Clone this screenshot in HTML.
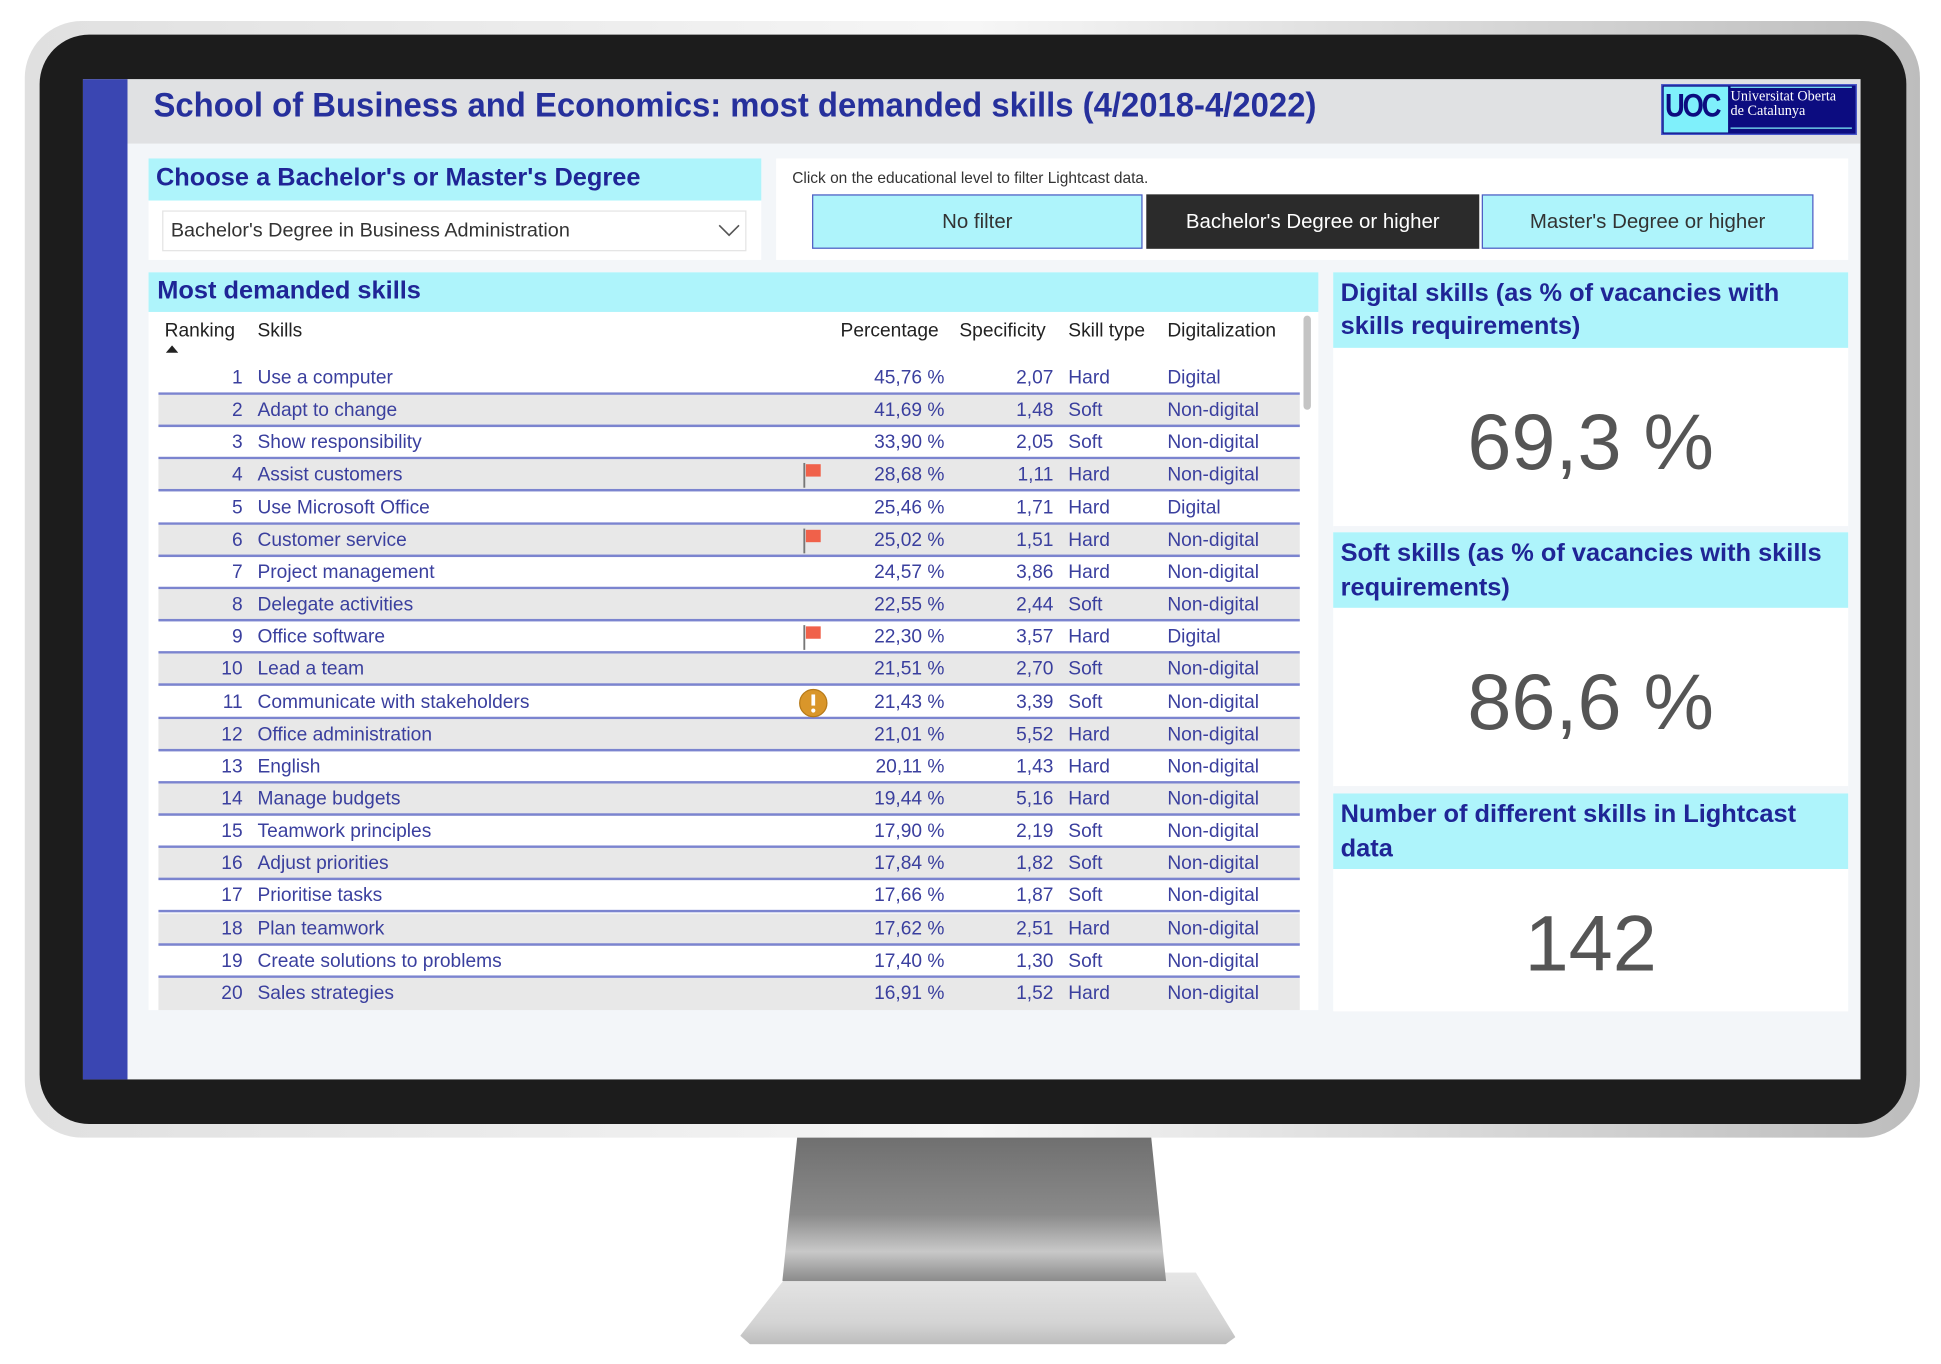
<!DOCTYPE html>
<html><head><meta charset="utf-8"><style>
*{margin:0;padding:0;box-sizing:border-box}
html,body{width:1941px;height:1364px;overflow:hidden;background:#fff;font-family:"Liberation Sans",sans-serif}
#s{position:absolute;left:0;top:0;width:1568px;height:1102px;transform:scale(1.23788);transform-origin:0 0}
.a{position:absolute}
.hd{background:#aef4fb;color:#1f2596;font-weight:bold}
.r{position:absolute;left:128px;width:922px;height:26px;border-bottom:2px solid #7b84cf;color:#3a3f9e;font-size:15.5px}
.r span{position:absolute;top:4px;white-space:nowrap}
.g{background:#e8e8e8}
.big{position:absolute;left:1077px;width:416px;text-align:center;font-size:64px;color:#555}
</style></head><body><div id="s">
<div class="a" style="left:598px;top:1028px;width:400px;height:58px;background:linear-gradient(180deg,#e6e6e6,#d4d4d4 70%,#bdbdbd);clip-path:polygon(10% 0,92% 0,100% 90%,98% 100%,2% 100%,0 88%);"></div>
<div class="a" style="left:632px;top:915px;width:310px;height:120px;background:linear-gradient(180deg,#6e6e6e,#8a8a8a 55%,#c8c8c8 80%,#8a8a8a);clip-path:polygon(4% 0,96% 0,100% 100%,0 100%)"></div>
<div class="a" style="left:20px;top:17px;width:1531px;height:902px;border-radius:46px;background:linear-gradient(90deg,#e0e0e0,#f6f6f6 50%,#bdbdbd)"></div>
<div class="a" style="left:32px;top:28px;width:1508px;height:880px;border-radius:40px;background:#1c1c1c"></div>
<div class="a" style="left:67px;top:64px;width:1436px;height:808px;background:#f3f6f9"></div>
<div class="a" style="left:67px;top:64px;width:36px;height:808px;background:#3a46b2"></div>
<div class="a" style="left:103px;top:64px;width:1400px;height:52px;background:#e0e1e3"></div>
<div class="a" style="left:124px;top:67px;font-size:27.5px;font-weight:bold;color:#26309c;white-space:nowrap;transform:scaleX(.965);transform-origin:0 0;line-height:36px">School of Business and Economics: most demanded skills (4/2018-4/2022)</div>
<div class="a" style="left:1342px;top:68px;width:158px;height:41px;background:#0c0c80;border:1px solid #4a5ad0"></div>
<div class="a" style="left:1344px;top:70px;width:52px;height:37px;background:#7ff0fb"></div>
<div class="a" style="left:1345px;top:68px;font-size:26px;font-weight:bold;color:#0c0c80;letter-spacing:-2px;line-height:34px;transform:scaleX(.85);transform-origin:0 0">UOC</div>
<div class="a" style="left:1398px;top:72px;font-family:'Liberation Serif',serif;font-size:11.5px;color:#fff;line-height:12px">Universitat Oberta<br>de Catalunya</div>
<div class="a" style="left:1398px;top:70px;width:98px;height:1px;background:#7ff0fb"></div>
<div class="a" style="left:1398px;top:103px;width:98px;height:1px;background:#7ff0fb"></div>
<div class="a" style="left:120px;top:128px;width:495px;height:82px;background:#fff"></div>
<div class="a hd" style="left:120px;top:128px;width:495px;height:34px;font-size:20.5px;padding:4px 0 0 6px">Choose a Bachelor's or Master's Degree</div>
<div class="a" style="left:131px;top:170px;width:472px;height:33px;border:1px solid #e4e4e4;background:#fff;font-size:16px;color:#333;padding:7px 0 0 6px">Bachelor's Degree in Business Administration</div>
<svg class="a" style="left:580px;top:180px" width="18" height="12"><path d="M1 2 L9 10 L17 2" fill="none" stroke="#555" stroke-width="1.3"/></svg>
<div class="a" style="left:627px;top:128px;width:866px;height:82px;background:#fff"></div>
<div class="a" style="left:640px;top:137px;font-size:12.5px;color:#333">Click on the educational level to filter Lightcast data.</div>
<div class="a" style="left:656px;top:157px;width:267px;height:44px;background:#aef4fb;border:1px solid #4f5cc4;font-size:16.5px;color:#333;text-align:center;line-height:42px">No filter</div>
<div class="a" style="left:926px;top:157px;width:269px;height:44px;background:#2b2b2b;font-size:16.5px;color:#fff;text-align:center;line-height:44px">Bachelor's Degree or higher</div>
<div class="a" style="left:1197px;top:157px;width:268px;height:44px;background:#aef4fb;border:1px solid #4f5cc4;font-size:16.5px;color:#333;text-align:center;line-height:42px">Master's Degree or higher</div>
<div class="a" style="left:120px;top:220px;width:945px;height:596px;background:#fff"></div>
<div class="a hd" style="left:120px;top:220px;width:945px;height:32px;font-size:20.5px;padding:3px 0 0 7px">Most demanded skills</div>
<div class="a" style="left:0;top:259px;font-size:15.5px;color:#222;width:1100px;height:20px">
<span class="a" style="left:133px">Ranking</span><span class="a" style="left:208px">Skills</span><span class="a" style="left:679px">Percentage</span><span class="a" style="left:775px">Specificity</span><span class="a" style="left:863px">Skill type</span><span class="a" style="left:943px">Digitalization</span></div>
<svg class="a" style="left:134px;top:279px" width="10" height="7"><path d="M0 6 L5 0 L10 6Z" fill="#222"/></svg>
<div class="a" style="left:1053px;top:255px;width:6px;height:76px;background:#c4c4c4;border-radius:3px"></div>
<div id="rows"></div>
<div class="a" style="left:1077px;top:220px;width:416px;height:597px;background:#fff"></div>
<div class="a hd" style="left:1077px;top:220px;width:416px;height:61px;font-size:20.5px;padding:3px 6px;line-height:27px">Digital skills (as % of vacancies with skills requirements)</div>
<div class="a" style="left:1077px;top:425px;width:416px;height:5px;background:#f3f6f9"></div>
<div class="a hd" style="left:1077px;top:430px;width:416px;height:61px;font-size:20.5px;padding:3px 6px;line-height:28px">Soft skills (as % of vacancies with skills requirements)</div>
<div class="a" style="left:1077px;top:635px;width:416px;height:6px;background:#f3f6f9"></div>
<div class="a hd" style="left:1077px;top:641px;width:416px;height:61px;font-size:20.5px;padding:3px 6px;line-height:28px">Number of different skills in Lightcast data</div>
<div class="big" style="top:320px">69,3 %</div>
<div class="big" style="top:530px">86,6 %</div>
<div class="big" style="top:725px">142</div>
</div>
<script>
var d=[["Use a computer","45,76","2,07","Hard","Digital"],["Adapt to change","41,69","1,48","Soft","Non-digital"],["Show responsibility","33,90","2,05","Soft","Non-digital"],["Assist customers","28,68","1,11","Hard","Non-digital","f"],["Use Microsoft Office","25,46","1,71","Hard","Digital"],["Customer service","25,02","1,51","Hard","Non-digital","f"],["Project management","24,57","3,86","Hard","Non-digital"],["Delegate activities","22,55","2,44","Soft","Non-digital"],["Office software","22,30","3,57","Hard","Digital","f"],["Lead a team","21,51","2,70","Soft","Non-digital"],["Communicate with stakeholders","21,43","3,39","Soft","Non-digital","w"],["Office administration","21,01","5,52","Hard","Non-digital"],["English","20,11","1,43","Hard","Non-digital"],["Manage budgets","19,44","5,16","Hard","Non-digital"],["Teamwork principles","17,90","2,19","Soft","Non-digital"],["Adjust priorities","17,84","1,82","Soft","Non-digital"],["Prioritise tasks","17,66","1,87","Soft","Non-digital"],["Plan teamwork","17,62","2,51","Hard","Non-digital"],["Create solutions to problems","17,40","1,30","Soft","Non-digital"],["Sales strategies","16,91","1,52","Hard","Non-digital"]];
var h="";
d.forEach(function(r,i){var t=Math.round(293+26.15*i);
var ic="";
if(r[5]=="f")ic='<svg style="position:absolute;left:520px;top:2px" width="18" height="22"><rect x="1" y="1" width="1.5" height="20" fill="#777"/><rect x="3" y="2" width="12" height="10" fill="#f0614a"/></svg>';
if(r[5]=="w")ic='<svg style="position:absolute;left:517px;top:1px" width="24" height="24"><circle cx="12" cy="12" r="11" fill="#d9962a" stroke="#b77a18"/><rect x="10.5" y="5" width="3" height="9" fill="#fff"/><circle cx="12" cy="18" r="1.7" fill="#fff"/></svg>';
h+='<div class="r'+(i%2?' g':'')+'" style="top:'+t+'px'+(i==19?';border-bottom:none':'')+'">'+ic+'<span style="right:854px">'+(i+1)+'</span><span style="left:80px">'+r[0]+'</span><span style="right:287px">'+r[1]+' %</span><span style="right:199px">'+r[2]+'</span><span style="left:735px">'+r[3]+'</span><span style="left:815px">'+r[4]+'</span></div>';});
document.getElementById("rows").innerHTML=h;
</script>
</body></html>
